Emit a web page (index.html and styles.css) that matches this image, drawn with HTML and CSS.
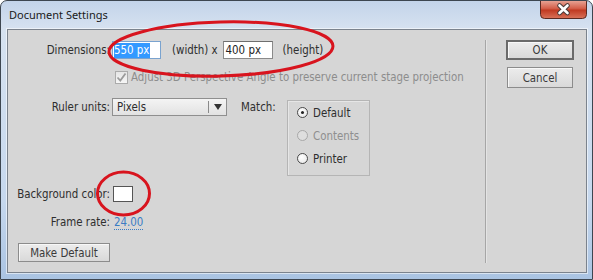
FILE: index.html
```
<!DOCTYPE html>
<html>
<head>
<meta charset="utf-8">
<link rel="stylesheet" href="styles.css">
</head>
<body>
<div class="window">
  <div class="titlebar">
    <span class="title">Document Settings</span>
    <div class="close">
      <svg width="47" height="19" viewBox="0 0 47 19">
        <defs>
          <linearGradient id="cg" x1="0" y1="0" x2="0" y2="1">
            <stop offset="0" stop-color="#e9aa9c"/>
            <stop offset="0.45" stop-color="#d4604b"/>
            <stop offset="0.55" stop-color="#c03a22"/>
            <stop offset="1" stop-color="#d9735a"/>
          </linearGradient>
        </defs>
        <path d="M0.5 0 V14.5 Q0.5 18.5 4.5 18.5 H42.5 Q46.5 18.5 46.5 14.5 V0" fill="url(#cg)" stroke="#5b2a22"/>
        <path d="M19.5 5.5 L27.5 13 M27.5 5.5 L19.5 13" stroke="#4a3a38" stroke-width="4.6" stroke-linecap="round"/>
        <path d="M19.5 5.5 L27.5 13 M27.5 5.5 L19.5 13" stroke="#ffffff" stroke-width="2.6" stroke-linecap="round"/>
      </svg>
    </div>
  </div>
  <div class="panel">
    <div class="main">
      <div class="row row-dim">
        <span class="lbl">Dimensions:</span>
        <span class="input focused"><span class="sel">550 px</span></span>
        <span class="txt wtxt">(width) x</span>
        <span class="input second">400 px</span>
        <span class="txt htxt">(height)</span>
      </div>
      <div class="row row-check">
        <span class="check">
          <svg width="13" height="13" viewBox="0 0 13 13"><path d="M2.5 6.5 L5.3 9.5 L10.5 2.5" fill="none" stroke="#9b9b9b" stroke-width="1.8"/></svg>
        </span>
        <span class="dis">Adjust 3D Perspective Angle to preserve current stage projection</span>
      </div>
      <div class="row row-ruler">
        <span class="lbl">Ruler units:</span>
        <div class="select"><span class="sval">Pixels</span><span class="sarrow"><svg width="8" height="6" viewBox="0 0 8 6"><path d="M0 0 H8 L4 6 Z" fill="#333"/></svg></span></div>
        <span class="match">Match:</span>
        <div class="group">
          <div class="radio"><span class="rc on"></span><span>Default</span></div>
          <div class="radio disabled"><span class="rc"></span><span>Contents</span></div>
          <div class="radio"><span class="rc"></span><span>Printer</span></div>
        </div>
      </div>
      <div class="row row-bg">
        <span class="lbl">Background color:</span>
        <span class="swatch"></span>
      </div>
      <div class="row row-fr">
        <span class="lbl">Frame rate:</span>
        <span class="link">24.00</span>
      </div>
      <div class="row row-btn">
        <button class="btn make">Make Default</button>
      </div>
    </div>
    <div class="sep"></div>
    <div class="side">
      <button class="btn ok">OK</button>
      <button class="btn cancel">Cancel</button>
    </div>
  </div>
  <svg class="marks" width="593" height="280" viewBox="0 0 593 280">
    <ellipse cx="221" cy="49" rx="112" ry="27" transform="rotate(-1.5 221 49)" fill="none" stroke="#d8141e" stroke-width="3"/>
    <ellipse cx="123.5" cy="193.5" rx="26" ry="21.5" fill="none" stroke="#d8141e" stroke-width="3"/>
  </svg>
</div>
</body>
</html>
```
FILE: styles.css
```
html, body {
  margin: 0;
  padding: 0;
  background: #ffffff;
}

.window {
  position: relative;
  width: 593px;
  height: 280px;
  box-sizing: border-box;
  border: 1px solid #3d4650;
  border-radius: 7px 7px 0 0;
  padding: 0 5px 6px 6px;
  background: linear-gradient(to bottom, #c3d4ea 0px, #d6e2f0 28px, #c6d8ee 200px, #a9c3e2 280px);
  overflow: hidden;
  font-family: "DejaVu Sans Condensed", "DejaVu Sans", sans-serif;
  font-size: 11.4px;
  color: #2e2e2e;
}

.titlebar {
  height: 28px;
  display: flex;
  align-items: flex-start;
  justify-content: space-between;
}

.title {
  font-family: "Noto Sans", sans-serif;
  font-size: 11px;
  color: #1a1a1a;
  margin-left: 2px;
  margin-top: 6px;
}

.close {
  width: 47px;
  height: 19px;
  margin-top: -1px;
  margin-right: 0px;
}

.close svg {
  display: block;
}

.panel {
  height: 244px;
  box-sizing: border-box;
  border: 1px solid #7b838d;
  box-shadow: 0 0 0 1px rgba(255, 255, 255, 0.55);
  background: #d6d6d6;
  display: flex;
}

.main {
  width: 477px;
  display: flex;
  flex-direction: column;
}

.row {
  display: flex;
  align-items: center;
}

.lbl {
  width: 102px;
  text-align: right;
  white-space: nowrap;
  flex: none;
}

.row-dim {
  margin-top: 11px;
  height: 18px;
}

.input {
  box-sizing: border-box;
  height: 18px;
  width: 49px;
  background: #ffffff;
  border: 1px solid #8a8a8a;
  border-top-color: #6e6e6e;
  display: flex;
  align-items: center;
  padding-left: 2px;
  color: #222;
}

.input.focused {
  margin-left: 2px;
  border-color: #7aa3cf;
  padding-left: 1px;
}

.input.second {
  width: 50px;
  margin-left: 5px;
}

.sel {
  background: #3399ff;
  color: #ffffff;
  height: 15px;
  line-height: 15px;
  padding-right: 1px;
}

.wtxt {
  margin-left: 11px;
}

.htxt {
  margin-left: 10px;
}

.row-check {
  margin-top: 11px;
  height: 14px;
}

.check {
  margin-left: 107px;
  width: 13px;
  height: 13px;
  box-sizing: border-box;
  border: 1px solid #ababab;
  background: linear-gradient(to bottom, #e6e6e6, #f6f6f6);
  display: flex;
}

.check svg {
  margin: -1px;
}

.dis {
  margin-left: 3px;
  color: #8d8d8d;
  white-space: nowrap;
}

.row-ruler {
  margin-top: 14px;
  align-items: flex-start;
}

.row-ruler .lbl {
  line-height: 18px;
}

.select {
  margin-left: 2px;
  box-sizing: border-box;
  width: 115px;
  height: 18px;
  border: 1px solid #8f8f8f;
  background: linear-gradient(to bottom, #f4f4f4, #e2e2e2);
  display: flex;
  align-items: center;
}

.sval {
  flex: 1;
  padding-left: 4px;
}

.sarrow {
  width: 17px;
  height: 12px;
  border-left: 1px solid #8a8a8a;
  display: flex;
  align-items: center;
  justify-content: center;
}

.sarrow svg {
  display: block;
}

.match {
  margin-left: 14px;
  width: 46px;
  line-height: 18px;
}

.group {
  margin-top: 2px;
  box-sizing: border-box;
  width: 83px;
  height: 76px;
  border: 1px solid #b5b5b5;
  box-shadow: inset 1px 1px 0 #e6e6e6;
  padding-left: 9px;
}

.radio {
  height: 23px;
  display: flex;
  align-items: center;
}

.radio.disabled {
  color: #8f8f8f;
}

.rc {
  width: 11px;
  height: 11px;
  box-sizing: border-box;
  border-radius: 50%;
  border: 1px solid #4a4a4a;
  background: radial-gradient(circle at 40% 35%, #ffffff, #e4e4e4);
  margin-right: 5px;
  position: relative;
}

.radio.disabled .rc {
  border-color: #a8a8a8;
  background: #dedede;
}

.rc.on::after {
  content: "";
  position: absolute;
  left: 3px;
  top: 3px;
  width: 3px;
  height: 3px;
  border-radius: 50%;
  background: #222;
}

.row-bg {
  margin-top: 10px;
  height: 16px;
}

.swatch {
  margin-left: 3px;
  width: 20px;
  height: 16px;
  box-sizing: border-box;
  border: 1px solid #555;
  background: #ffffff;
}

.row-fr {
  margin-top: 12px;
  height: 16px;
}

.link {
  margin-left: 4px;
  color: #3b7cc4;
  border-bottom: 1px dotted #3b7cc4;
  line-height: 13px;
  margin-top: 2px;
}

.row-btn {
  margin-top: 13px;
}

.btn {
  font-family: "DejaVu Sans Condensed", "DejaVu Sans", sans-serif;
  font-size: 11.4px;
  color: #3a3a3a;
  box-sizing: border-box;
  height: 19px;
  padding: 0;
  border: 1px solid #8c8c8c;
  background: linear-gradient(to bottom, #ececec, #d9d9d9);
  box-shadow: inset 1px 1px 0 #f8f8f8;
  display: flex;
  align-items: center;
  justify-content: center;
}

.make {
  margin-left: 10px;
  width: 92px;
}

.sep {
  width: 1px;
  margin: 10px 0 9px 0;
  background: #a6a6a6;
  box-shadow: 1px 0 0 #e4e4e4;
}

.side {
  flex: 1;
  display: flex;
  flex-direction: column;
  padding-left: 20px;
}

.ok {
  margin-top: 10px;
  width: 68px;
  height: 20px;
  border: 2px solid #6a6a6a;
}

.cancel {
  margin-top: 7px;
  margin-left: 1px;
  width: 66px;
  height: 21px;
}

.marks {
  position: absolute;
  left: -1px;
  top: -1px;
  pointer-events: none;
}
```
